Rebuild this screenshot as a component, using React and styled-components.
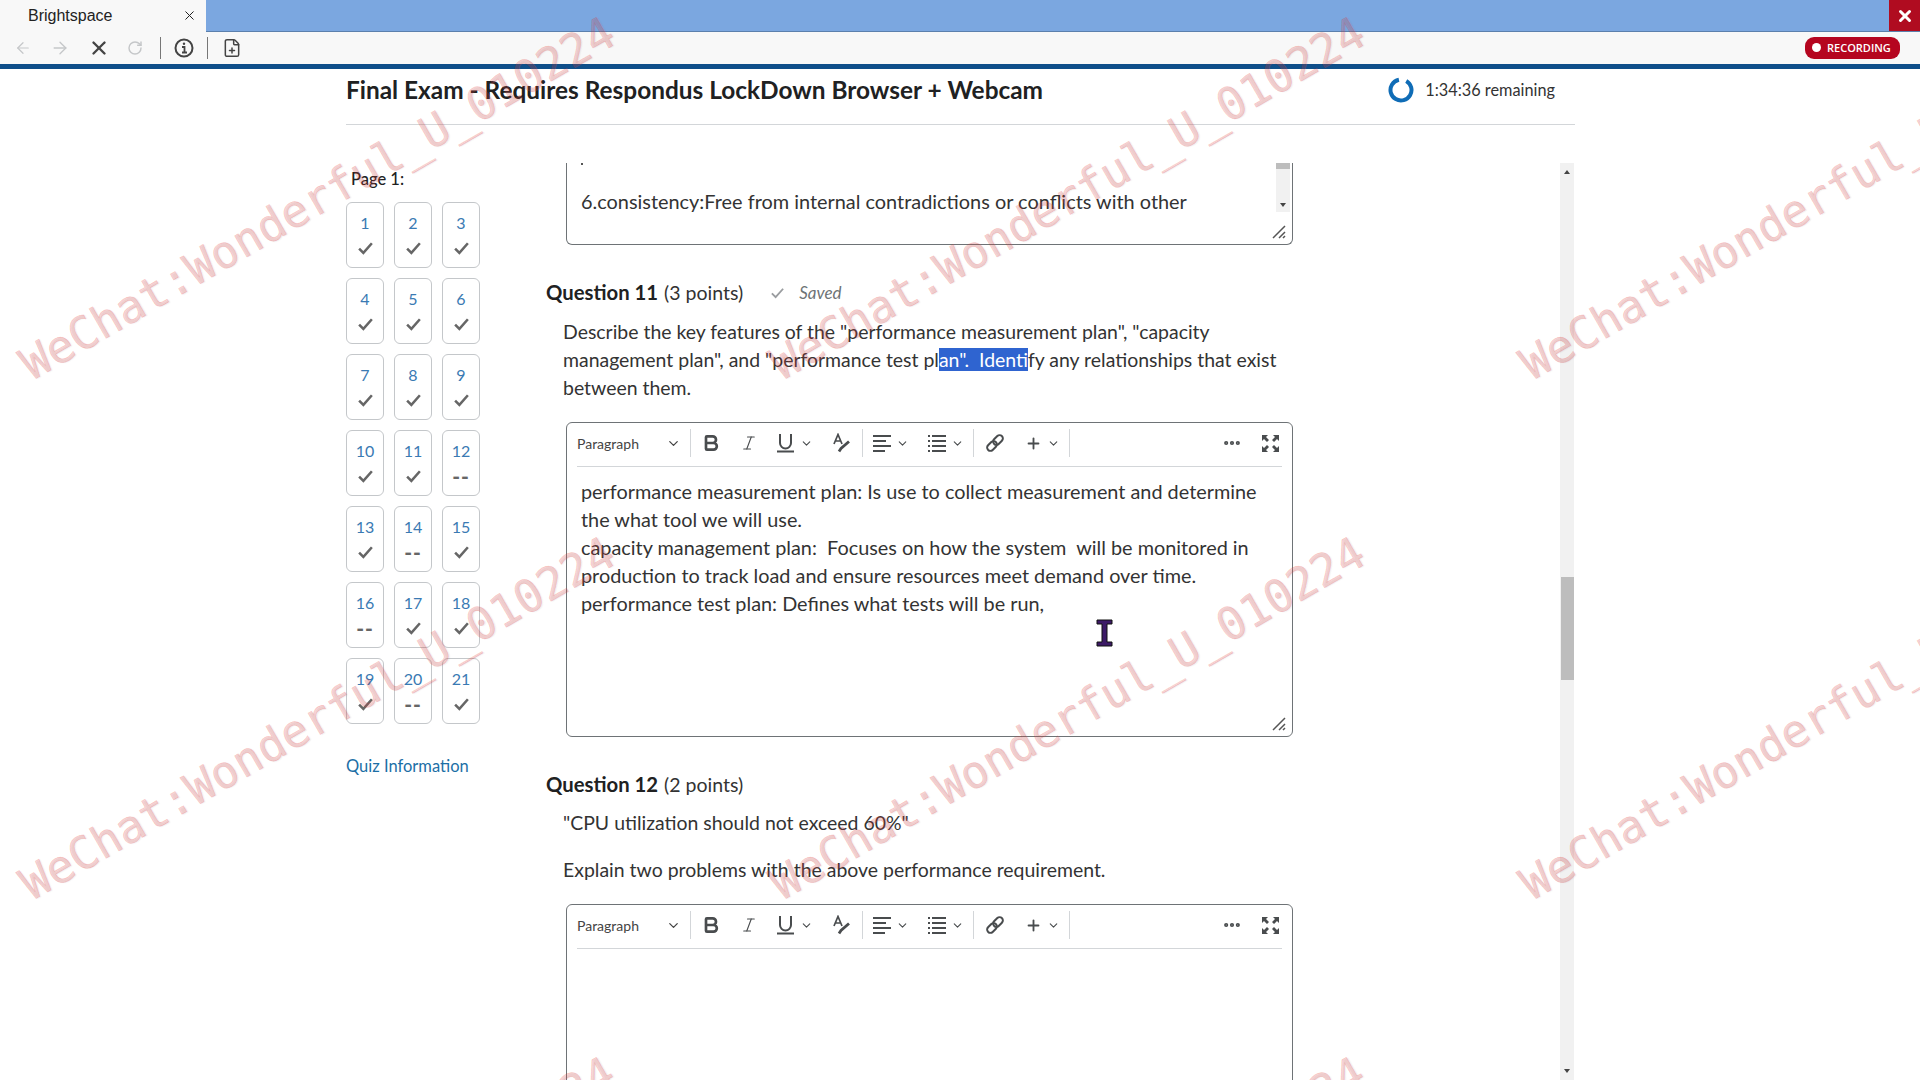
import React from 'react';
import styled, { createGlobalStyle } from 'styled-components';
import { ArrowLeft, ArrowRight, X, RotateCw, FilePlus, Bold, Italic, ChevronDown, Plus, MoreHorizontal } from 'lucide-react';

const GlobalStyle = createGlobalStyle`
  html, body { margin: 0; padding: 0; background: #fff; }
  body { font-family: Lato, "Open Sans", sans-serif; color: #202122; overflow: hidden; }
  * { box-sizing: border-box; }
`;

const Page = styled.div`
  position: relative;
  width: 1920px;
  height: 1080px;
  overflow: hidden;
  display: flex;
  flex-direction: column;
`;

const TabStrip = styled.div`
  height: 32px;
  display: flex;
  background: #7ba7e0;
  border-bottom: 1px solid #5c80ad;
`;

const Tab = styled.div`
  width: 206px;
  height: 32px;
  background: #f8f8f8;
  display: flex;
  align-items: center;
  justify-content: space-between;
  padding: 0 9px 1px 28px;
  font: 16px "Liberation Sans", Arial, sans-serif;
  color: #222;
`;

const TabSpacer = styled.div`
  flex: 1;
`;

const CloseButton = styled.div`
  width: 31px;
  height: 31px;
  background: #b00c20;
  display: flex;
  align-items: center;
  justify-content: center;
  color: #fff;
`;

const BrowserBar = styled.div`
  height: 32px;
  background: #f8f8f8;
  display: flex;
  align-items: center;
  padding: 0 20px 1px 14px;
`;

const BarIcon = styled.div`
  width: ${p => p.$w}px;
  display: flex;
  justify-content: center;
  color: ${p => p.$c || '#444'};
`;

const BarSep = styled.div`
  width: 1px;
  height: 22px;
  background: #777;
`;

const RecordingPill = styled.div`
  margin-left: auto;
  width: 95px;
  height: 22px;
  border-radius: 9px;
  background: #b5051f;
  color: #fff;
  display: flex;
  align-items: center;
  gap: 6px;
  padding-left: 7px;
  font: 600 11px "Open Sans", sans-serif;
`;

const RecordingDot = styled.span`
  width: 9px;
  height: 9px;
  border-radius: 50%;
  background: #fff;
`;

const BlueRule = styled.div`
  height: 5px;
  background: #0f4f8a;
`;

const Shell = styled.div`
  width: 1229px;
  margin-left: 346px;
  flex: 1;
  min-height: 0;
  display: flex;
  flex-direction: column;
`;

const QuizHeader = styled.header`
  height: 56px;
  flex: none;
  display: flex;
  align-items: center;
  justify-content: space-between;
  border-bottom: 1px solid #d3d6d9;
  padding: 0 20px 14px 0;
`;

const QuizTitle = styled.h1`
  margin: 0;
  font: 700 24.4px Lato, sans-serif;
  color: #202122;
`;

const Timer = styled.div`
  display: flex;
  align-items: center;
  gap: 11px;
  font-size: 16.3px;
  color: #333;
`;

const Body = styled.div`
  flex: 1;
  min-height: 0;
  display: flex;
  padding-top: 38px;
`;

const Sidebar = styled.nav`
  width: 200px;
  flex: none;
  margin-top: 7px;
`;

const PageLabel = styled.div`
  font-size: 16.5px;
  font-weight: 500;
  line-height: 18px;
  padding-left: 5px;
  margin-bottom: 14px;
`;

const QuestionGrid = styled.div`
  display: grid;
  grid-template-columns: repeat(3, 38px);
  grid-auto-rows: 66px;
  gap: 10px;
`;

const QuestionCell = styled.div`
  border: 1px solid #c4c7ca;
  border-radius: 6px;
  display: flex;
  flex-direction: column;
  align-items: center;
  padding-top: 10px;
  font-size: 16px;
  line-height: 19px;
  color: #3a7ab3;
`;

const CellMark = styled.div`
  height: 24px;
  margin-top: 3px;
  display: flex;
  align-items: center;
  color: #666;
  font-weight: 900;
  font-size: 21px;
  letter-spacing: 1px;
`;

const QuizInfo = styled.div`
  margin-top: 32px;
  font-size: 16.5px;
  line-height: 20px;
  color: #1c6fa6;
`;

const Main = styled.main`
  flex: 1;
  min-width: 0;
  height: 917px;
  overflow: hidden;
  display: flex;
`;

const Content = styled.div`
  flex: 1;
  min-width: 0;
`;

const PrevAnswer = styled.div`
  position: relative;
  width: 727px;
  height: 82px;
  margin-left: 20px;
  border: 1px solid #6e7376;
  border-top: none;
  border-radius: 0 0 6px 6px;
  display: flex;
  justify-content: space-between;
`;

const PrevText = styled.div`
  padding-left: 14px;
  font-size: 19.9px;
  line-height: 28px;
  color: #333;
`;

const Speck = styled.div`
  width: 2px;
  height: 2px;
  margin-bottom: 22px;
  background: #555;
`;

const InnerScroll = styled.div`
  width: 14px;
  height: 49px;
  margin-right: 2px;
  background: #f1f1f1;
  display: flex;
  flex-direction: column;
  justify-content: space-between;
  align-items: center;
  padding-bottom: 5px;
`;

const InnerThumb = styled.div`
  width: 14px;
  height: 6px;
  background: #bdbdbd;
`;

const Arrow = styled.span`
  display: block;
  width: 0;
  height: 0;
  border-left: 3.5px solid transparent;
  border-right: 3.5px solid transparent;
  border-${p => (p.$up ? 'bottom' : 'top')}: 4px solid #444;
`;

const Grip = styled.svg`
  position: absolute;
  right: 6px;
  bottom: 5px;
`;

const QuestionHead = styled.div`
  display: flex;
  align-items: center;
  height: 28px;
  font-size: 19.5px;
  color: #333;
  margin-top: ${p => p.$top}px;
`;

const QuestionName = styled.strong`
  font-weight: 700;
  font-size: 20.3px;
  color: #202122;
  margin-right: 6px;
`;

const SavedNote = styled.span`
  display: flex;
  align-items: center;
  gap: 14px;
  margin-left: 27px;
  font-size: 17px;
  font-style: italic;
  color: #6e7376;
`;

const Prompt = styled.p`
  margin: ${p => p.$top}px 0 0 17px;
  font-size: 19.45px;
  line-height: 28px;
  white-space: pre-wrap;
  color: #333;
`;

const Selected = styled.span`
  background: #2f64d0;
  color: #fff;
`;

const Editor = styled.div`
  position: relative;
  width: 727px;
  height: ${p => p.$h}px;
  margin: ${p => p.$top}px 0 0 20px;
  border: 1px solid #6e7376;
  border-radius: 6px;
  padding: 0 10px;
`;

const EditorBar = styled.div`
  height: 44px;
  display: flex;
  align-items: center;
  padding-bottom: 3px;
  border-bottom: 1px solid #d3d6d9;
  color: #494c4e;
`;

const ParagraphSelect = styled.div`
  width: 113px;
  display: flex;
  align-items: center;
  justify-content: space-between;
  padding-right: 9px;
  font-size: 14px;
  color: #444;
`;

const BarDivider = styled.div`
  width: 1px;
  height: 28px;
  background: #d3d6d9;
`;

const ToolSlot = styled.div`
  width: ${p => p.$w}px;
  margin-left: ${p => p.$gap || 0}px;
  display: flex;
  align-items: center;
  justify-content: center;
  gap: 5px;
`;

const BarGap = styled.div`
  flex: 1;
`;

const EditorText = styled.div`
  padding: 10px 2px 0 4px;
  font-size: 19.85px;
  line-height: 28px;
  white-space: pre-wrap;
  color: #333;
`;

const TextCursor = styled.svg`
  position: absolute;
  left: 529px;
  top: 196px;
`;

const PageScroll = styled.div`
  width: 14px;
  margin-right: 1px;
  background: #f1f1f1;
  display: flex;
  flex-direction: column;
  align-items: center;
  padding: 7px 0;
`;

const PageThumb = styled.div`
  width: 13px;
  height: 103px;
  margin-top: 403px;
  background: #bdbdbd;
`;

const ScrollEnd = styled.div`
  margin-top: auto;
  display: flex;
`;

const WatermarkLayer = styled.div`
  position: absolute;
  inset: 0;
  pointer-events: none;
  overflow: hidden;
`;

const Mark = styled.span`
  position: absolute;
  left: ${p => p.$x}px;
  top: ${p => p.$y}px;
  transform: rotate(-30deg);
  transform-origin: 0 100%;
  font: 45px/46px "DejaVu Sans Mono", monospace;
  white-space: nowrap;
  color: rgba(232, 50, 50, 0.2);
  -webkit-text-stroke: 0.7px rgba(232, 50, 50, 0.2);
  text-shadow: 1px 1px 1px rgba(110, 110, 110, 0.1);
`;

const marked = [1, 2, 3, 4, 5, 6, 7, 8, 9, 10, 11, 13, 15, 17, 18, 19, 21];
const questions = Array.from({ length: 21 }, (_, i) => i + 1);
const marks = [];
[0, 1, 2].forEach(r => [0, 1, 2].forEach(c => marks.push([36 + c * 750, 342 + r * 520])));

function Check({ size = 17, color = '#666', weight = 2.4 }) {
  return (
    <svg width={size} height={size} viewBox="0 0 16 16" fill="none">
      <path d="M2 9l4 4 8-9" stroke={color} strokeWidth={weight} />
    </svg>
  );
}

function Toolbar() {
  return (
    <EditorBar>
      <ParagraphSelect>Paragraph<ChevronDown size={15} /></ParagraphSelect>
      <BarDivider />
      <ToolSlot $w={40}><Bold size={20} strokeWidth={3.2} /></ToolSlot>
      <ToolSlot $w={36}><Italic size={18} strokeWidth={1.5} /></ToolSlot>
      <ToolSlot $w={54}>
        <svg width="19" height="20" viewBox="0 0 19 20" fill="none" stroke="currentColor" strokeWidth="2">
          <path d="M4 1v9a5.500 5.500 0 0 0 11 0V1M1 18.500h17" />
        </svg>
        <ChevronDown size={13} />
      </ToolSlot>
      <ToolSlot $w={41}>
        <svg width="20" height="20" viewBox="0 0 20 20" fill="none" stroke="currentColor" strokeWidth="1.700">
          <path d="M2 11 6 1.500 10 11M3.500 8h5" />
          <path d="M7 18.500l2-3 8-7" strokeWidth="2.800" />
        </svg>
      </ToolSlot>
      <BarDivider />
      <ToolSlot $w={54}>
        <svg width="19" height="18" viewBox="0 0 19 18" stroke="currentColor" strokeWidth="2">
          <path d="M1 2h18M1 7h13M1 12h18M1 17h12" />
        </svg>
        <ChevronDown size={13} />
      </ToolSlot>
      <ToolSlot $w={56}>
        <svg width="19" height="18" viewBox="0 0 19 18" stroke="currentColor" strokeWidth="2">
          <path d="M5 2h14M5 7h14M5 12h14M5 17h14M1 2h2M1 7h2M1 12h2M1 17h2" />
        </svg>
        <ChevronDown size={13} />
      </ToolSlot>
      <BarDivider />
      <ToolSlot $w={42}>
        <svg width="20" height="20" viewBox="0 0 20 20" fill="none" stroke="currentColor" strokeWidth="2">
          <rect x="1.500" y="9.750" width="11" height="6.500" rx="3.200" transform="rotate(-45 7 13)" />
          <rect x="7.500" y="3.750" width="11" height="6.500" rx="3.200" transform="rotate(-45 13 7)" />
        </svg>
      </ToolSlot>
      <ToolSlot $w={53}><Plus size={17} strokeWidth={2.6} /><ChevronDown size={13} /></ToolSlot>
      <BarDivider />
      <BarGap />
      <ToolSlot $w={24}><MoreHorizontal size={20} strokeWidth={3} /></ToolSlot>
      <ToolSlot $w={24} $gap={14}>
        <svg width="19" height="19" viewBox="0 0 19 19" fill="currentColor">
          <path d="M1 1h6L5 3l3 3-2 2-3-3-2 2zM18 1v6l-2-2-3 3-2-2 3-3-2-2zM1 18v-6l2 2 3-3 2 2-3 3 2 2zM18 18h-6l2-2-3-3 2-2 3 3 2-2z" />
        </svg>
      </ToolSlot>
    </EditorBar>
  );
}

export default function App() {
  return (
    <Page>
      <GlobalStyle />
      <TabStrip>
        <Tab>Brightspace<X size={15} strokeWidth={1.6} /></Tab>
        <TabSpacer />
        <CloseButton><X size={18} strokeWidth={4} /></CloseButton>
      </TabStrip>
      <BrowserBar>
        <BarIcon $w={18} $c="#c5c7c9"><ArrowLeft size={20} strokeWidth={1.6} /></BarIcon>
        <BarIcon $w={56} $c="#c5c7c9"><ArrowRight size={20} strokeWidth={1.6} /></BarIcon>
        <BarIcon $w={22} $c="#444"><X size={22} strokeWidth={2.6} /></BarIcon>
        <BarIcon $w={50} $c="#c5c7c9"><RotateCw size={16} strokeWidth={2.2} /></BarIcon>
        <BarSep />
        <BarIcon $w={46} $c="#444">
          <svg width="20" height="20" viewBox="0 0 20 20" fill="none" stroke="currentColor">
            <circle cx="10" cy="10" r="8.500" strokeWidth="2" />
            <path d="M8 9h2.500v5M8 14.500h5" strokeWidth="1.800" />
            <circle cx="10" cy="5.800" r="1.200" fill="currentColor" stroke="none" />
          </svg>
        </BarIcon>
        <BarSep />
        <BarIcon $w={47} $c="#444"><FilePlus size={20} strokeWidth={1.8} /></BarIcon>
        <RecordingPill><RecordingDot />RECORDING</RecordingPill>
      </BrowserBar>
      <BlueRule />
      <Shell>
        <QuizHeader>
          <QuizTitle>Final Exam - Requires Respondus LockDown Browser + Webcam</QuizTitle>
          <Timer>
            <svg width="26" height="26" viewBox="0 0 26 26" fill="none">
              <circle cx="13" cy="13" r="10.500" stroke="#0f6cb6" strokeWidth="4" strokeDasharray="58 8" transform="rotate(-60 13 13)" />
            </svg>
            1:34:36 remaining
          </Timer>
        </QuizHeader>
        <Body>
          <Sidebar>
            <PageLabel>Page 1:</PageLabel>
            <QuestionGrid>
              {questions.map(n => (
                <QuestionCell key={n}>
                  {n}
                  <CellMark>{marked.includes(n) ? <Check /> : '--'}</CellMark>
                </QuestionCell>
              ))}
            </QuestionGrid>
            <QuizInfo>Quiz Information</QuizInfo>
          </Sidebar>
          <Main>
            <Content>
              <PrevAnswer>
                <PrevText>
                  <Speck />
                  6.consistency:Free from internal contradictions or conflicts with other
                </PrevText>
                <InnerScroll><InnerThumb /><Arrow /></InnerScroll>
                <Grip width="14" height="14" viewBox="0 0 14 14" stroke="#555" strokeWidth="1.500"><path d="M1 13 13 1M7 13l6-6M11 13l2-2" /></Grip>
              </PrevAnswer>
              <QuestionHead $top={33}>
                <QuestionName>Question 11</QuestionName> (3 points)
                <SavedNote><Check size={15} color="#9a9da0" weight={2} />Saved</SavedNote>
              </QuestionHead>
              <Prompt $top={12}>
                Describe the key features of the "performance measurement plan", "capacity{'\n'}
                management plan", and "performance test pl<Selected>an".  Identi</Selected>fy any relationships that exist{'\n'}
                between them.
              </Prompt>
              <Editor $h={315} $top={20}>
                <Toolbar />
                <EditorText>
                  performance measurement plan: Is use to collect measurement and determine{'\n'}
                  the what tool we will use.{'\n'}
                  capacity management plan:  Focuses on how the system  will be monitored in{'\n'}
                  production to track load and ensure resources meet demand over time.{'\n'}
                  performance test plan: Defines what tests will be run,
                </EditorText>
                <TextCursor width="17" height="28" viewBox="0 0 17 28">
                  <path d="M1 1h15v4h-5v18h5v4H1v-4h5V5H1z" fill="#3c1a66" stroke="#111" strokeWidth="1" />
                </TextCursor>
                <Grip width="14" height="14" viewBox="0 0 14 14" stroke="#555" strokeWidth="1.500"><path d="M1 13 13 1M7 13l6-6M11 13l2-2" /></Grip>
              </Editor>
              <QuestionHead $top={33}>
                <QuestionName>Question 12</QuestionName> (2 points)
              </QuestionHead>
              <Prompt $top={11}>"CPU utilization should not exceed 60%"</Prompt>
              <Prompt $top={19}>Explain two problems with the above performance requirement.</Prompt>
              <Editor $h={314} $top={20}>
                <Toolbar />
              </Editor>
            </Content>
            <PageScroll>
              <Arrow $up />
              <PageThumb />
              <ScrollEnd><Arrow /></ScrollEnd>
            </PageScroll>
          </Main>
        </Body>
      </Shell>
      <WatermarkLayer>
        {marks.map(([x, y]) => <Mark key={`${x}-${y}`} $x={x} $y={y}>WeChat:Wonderful_U_010224</Mark>)}
      </WatermarkLayer>
    </Page>
  );
}
